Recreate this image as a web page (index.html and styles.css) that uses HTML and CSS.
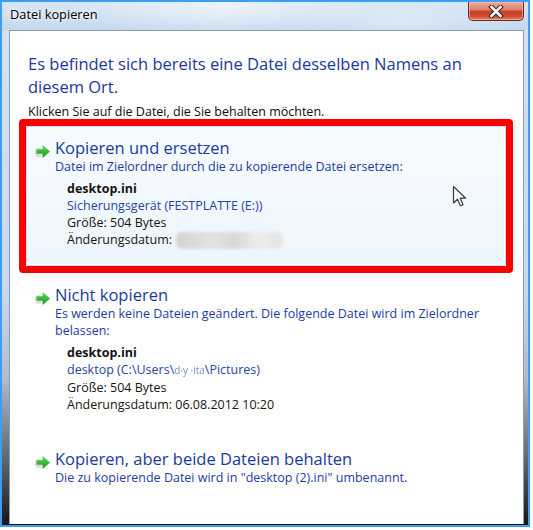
FILE: index.html
```html
<!DOCTYPE html>
<html lang="de">
<head>
<meta charset="utf-8">
<title>Datei kopieren</title>
<link rel="stylesheet" href="styles.css">
</head>
<body>
<div class="frame">
  <div class="window">
    <div class="titlebar">
      <span class="title">Datei kopieren</span>
      <div class="close" aria-label="Schließen">
        <svg class="close-x" width="16" height="13" viewBox="0 0 16 13">
          <path d="M3.5 2 L12.5 11 M12.5 2 L3.5 11" stroke="#3b2320" stroke-width="4.6" stroke-linecap="square" fill="none"/>
          <path d="M3.5 2 L12.5 11 M12.5 2 L3.5 11" stroke="#ffffff" stroke-width="2.6" stroke-linecap="square" fill="none"/>
        </svg>
      </div>
    </div>
    <div class="panel">
      <h1 class="instruction">Es befindet sich bereits eine Datei desselben Namens an diesem Ort.</h1>
      <p class="hint">Klicken Sie auf die Datei, die Sie behalten möchten.</p>

      <div class="options">
        <div class="option is-hover">
          <svg class="arrow" width="16" height="15" viewBox="0 0 16 15">
            <defs>
              <linearGradient id="g1" x1="0" y1="0" x2="0" y2="1">
                <stop offset="0" stop-color="#62dc5c"/>
                <stop offset="1" stop-color="#12951a"/>
              </linearGradient>
            </defs>
            <ellipse cx="3.5" cy="8.5" rx="3.5" ry="4.5" fill="#8a8a8a" opacity="0.28"/>
            <path d="M1.5 5.3 H7.6 V1 L15 7.5 L7.6 14 V9.7 H1.5 Z" fill="url(#g1)"/>
          </svg>
          <div class="option-body">
            <div class="option-title">Kopieren und ersetzen</div>
            <div class="option-desc">Datei im Zielordner durch die zu kopierende Datei ersetzen:</div>
            <div class="details">
              <div class="name">desktop.ini</div>
              <div class="loc">Sicherungsgerät (FESTPLATTE (E:))</div>
              <div>Größe: 504 Bytes</div>
              <div>Änderungsdatum: <span class="blurred"></span></div>
            </div>
          </div>
          <svg class="cursor" width="16" height="23" viewBox="0 0 16 23">
            <path d="M1.5 1.5 L1.5 18 L5.5 14.2 L8.4 20.8 L11 19.7 L8.2 13.2 L13.6 13.2 Z" fill="#ffffff" stroke="#3a3a3a" stroke-width="1.2" stroke-linejoin="round"/>
          </svg>
        </div>

        <div class="option">
          <svg class="arrow" width="16" height="15" viewBox="0 0 16 15">
            <defs>
              <linearGradient id="g2" x1="0" y1="0" x2="0" y2="1">
                <stop offset="0" stop-color="#62dc5c"/>
                <stop offset="1" stop-color="#12951a"/>
              </linearGradient>
            </defs>
            <ellipse cx="3.5" cy="8.5" rx="3.5" ry="4.5" fill="#8a8a8a" opacity="0.28"/>
            <path d="M1.5 5.3 H7.6 V1 L15 7.5 L7.6 14 V9.7 H1.5 Z" fill="url(#g2)"/>
          </svg>
          <div class="option-body">
            <div class="option-title">Nicht kopieren</div>
            <div class="option-desc">Es werden keine Dateien geändert. Die folgende Datei wird im Zielordner<br>belassen:</div>
            <div class="details">
              <div class="name">desktop.ini</div>
              <div class="loc">desktop (C:\Users\<span class="smudge">d·y ·ita</span>\Pictures)</div>
              <div>Größe: 504 Bytes</div>
              <div>Änderungsdatum: 06.08.2012 10:20</div>
            </div>
          </div>
        </div>

        <div class="option">
          <svg class="arrow" width="16" height="15" viewBox="0 0 16 15">
            <defs>
              <linearGradient id="g3" x1="0" y1="0" x2="0" y2="1">
                <stop offset="0" stop-color="#62dc5c"/>
                <stop offset="1" stop-color="#12951a"/>
              </linearGradient>
            </defs>
            <ellipse cx="3.5" cy="8.5" rx="3.5" ry="4.5" fill="#8a8a8a" opacity="0.28"/>
            <path d="M1.5 5.3 H7.6 V1 L15 7.5 L7.6 14 V9.7 H1.5 Z" fill="url(#g3)"/>
          </svg>
          <div class="option-body">
            <div class="option-title">Kopieren, aber beide Dateien behalten</div>
            <div class="option-desc">Die zu kopierende Datei wird in "desktop (2).ini" umbenannt.</div>
          </div>
        </div>
      </div>
    </div>
  </div>
</div>
</body>
</html>
```

FILE: styles.css
```css
* {
  box-sizing: border-box;
  margin: 0;
  padding: 0;
}

html, body {
  background: #ffffff;
}

body {
  width: 533px;
  height: 530px;
  overflow: hidden;
  font-family: "Open Sans", "Noto Sans", "DejaVu Sans", sans-serif;
  color: #111111;
}

.frame {
  width: 530px;
  height: 527px;
  border: 2px solid #3d9cf4;
  display: flex;
}

.window {
  flex: 1;
  display: flex;
  flex-direction: column;
  background: linear-gradient(180deg, #d3e3f4 0%, #c6daef 55%, #aebdcc 72%, #5b646d 88%, #141618 100%);
}

.titlebar {
  height: 28px;
  display: flex;
  justify-content: space-between;
  align-items: flex-start;
  padding: 0 4px 0 8px;
  background:
    radial-gradient(ellipse 160px 30px at 220px 6px, rgba(255, 255, 255, 0.55), rgba(255, 255, 255, 0)),
    radial-gradient(ellipse 120px 26px at 400px 20px, rgba(255, 255, 255, 0.35), rgba(255, 255, 255, 0)),
    linear-gradient(180deg, #d7e6f6 0%, #c3d8ee 100%);
}

.title {
  font-size: 12.8px;
  line-height: 16px;
  margin-top: 4px;
  color: #000000;
  text-shadow: 0 0 4px #ffffff, 0 0 8px #ffffff;
}

.close {
  width: 56px;
  height: 19px;
  border: 1px solid #6e2a22;
  border-top: none;
  border-radius: 0 0 5px 5px;
  background: linear-gradient(180deg, #e9a797 0%, #dc8470 42%, #c6402a 52%, #cf4c33 78%, #e08663 100%);
  box-shadow: inset 0 0 0 1px rgba(255, 220, 210, 0.45);
  display: flex;
  align-items: center;
  justify-content: center;
}

.close-x {
  display: block;
}

.panel {
  flex: 1;
  margin: 0 4px 1px 7px;
  background: #ffffff;
  border: 1px solid #8d9bab;
  border-bottom: none;
  padding: 22px 17px 0 16px;
}

.instruction {
  margin-left: 2px;
  font-size: 16.5px;
  line-height: 22.6px;
  font-weight: 400;
  color: #19389c;
}

.hint {
  margin: 5px 0 0 2px;
  font-size: 12.5px;
  line-height: 17px;
  color: #0d0d0d;
}

.options {
  margin-top: 6px;
  display: flex;
  flex-direction: column;
  gap: 7px;
}

.option {
  position: relative;
  display: grid;
  grid-template-columns: 14px 1fr;
  column-gap: 5px;
  padding: 11px 10px 16px 9px;
  border: 1px solid transparent;
  border-radius: 3px;
}

.option.is-hover {
  border-color: #bcdff4;
  background: linear-gradient(180deg, #f7fbfe 0%, #edf6fd 100%);
  box-shadow: inset 0 0 0 1px #ffffff;
}

.option.is-hover::after {
  content: "";
  position: absolute;
  inset: -8px;
  border: 7px solid #fe0000;
  border-radius: 4px;
  pointer-events: none;
}

.arrow {
  display: block;
  margin: 6px 0 0 -1px;
}

.option-title {
  font-size: 16.5px;
  line-height: 20px;
  color: #1a3a9e;
}

.option-desc {
  font-size: 12.5px;
  line-height: 17px;
  color: #1d3da2;
}

.details {
  margin: 5px 0 0 12px;
  font-size: 12.5px;
  line-height: 17px;
  color: #141414;
}

.name {
  font-weight: 700;
}

.loc {
  color: #2346a6;
}

.smudge {
  color: #7d8fc8;
  font-size: 10px;
  filter: blur(0.4px);
}

.blurred {
  display: inline-block;
  width: 107px;
  height: 17px;
  margin-left: 1px;
  vertical-align: -5px;
  border-radius: 6px;
  background: linear-gradient(90deg, #d4d4d4 0%, #e2e2e2 35%, #d8d8d8 55%, #ececec 75%, #e4e4e4 100%);
  filter: blur(1.5px);
}

.cursor {
  position: absolute;
  left: 425px;
  top: 58px;
}
```
